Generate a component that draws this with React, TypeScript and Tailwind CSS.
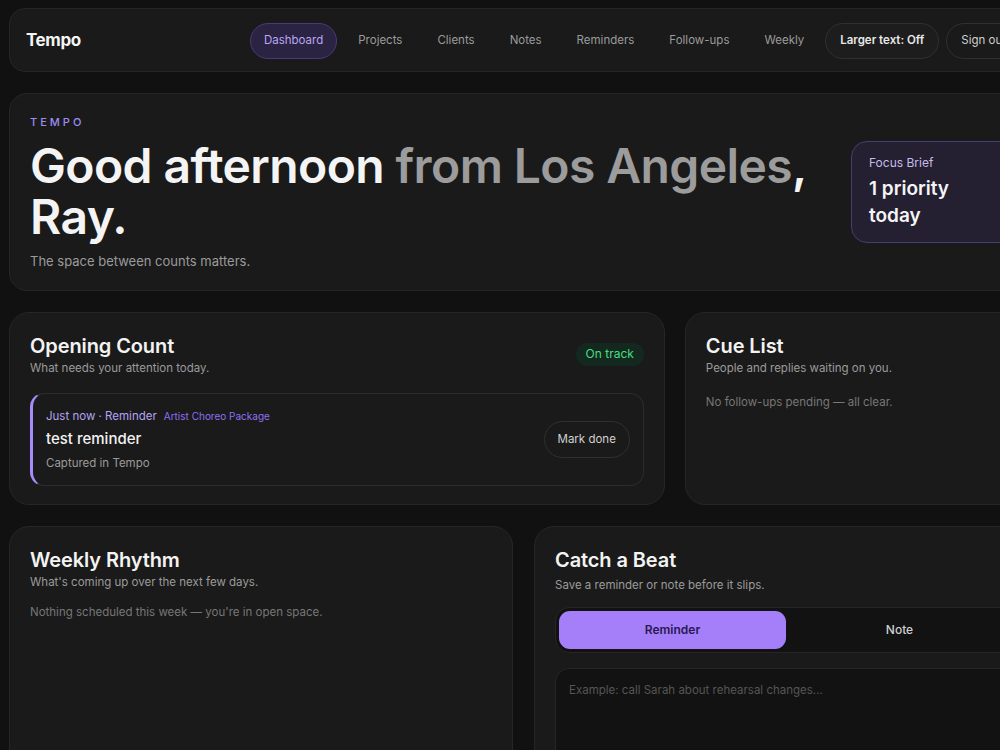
import React from "react";

const font = { fontFamily: "Inter, 'Noto Sans', sans-serif" };

function NavLink({ label, active }: { label: string; active?: boolean }) {
  return (
    <div
      className={
        active
          ? "h-9 flex items-center px-[13px] rounded-full border border-[#4a3a78] bg-[#2b2342] text-[11.5px] text-[#b9a6f5]"
          : "h-9 flex items-center px-[14px] rounded-full text-[11.5px] text-[#9b9b9b]"
      }
    >
      {label}
    </div>
  );
}

function CardTitle({ children }: { children: React.ReactNode }) {
  return <div className="text-[20px] leading-[28px] font-semibold text-[#f3f3f3] tracking-[-0.1px]">{children}</div>;
}

function CardHeader({ title, sub }: { title: string; sub: string }) {
  return (
    <div>
      <CardTitle>{title}</CardTitle>
      <div className="text-[11.5px] leading-[16px] text-[#9a9a9a]">{sub}</div>
    </div>
  );
}

export default function App() {
  return (
    <div className="w-[1000px] h-[750px] overflow-hidden bg-[#111111]" style={font}>
      <div className="w-[1048px] pl-[9px] pt-[8px] flex flex-col gap-[21px]">
        {/* Nav */}
        <div className="h-16 w-[1029px] rounded-[16px] border border-[#262626] bg-[#1a1a1a] px-4 pt-[2px] flex items-center justify-between">
          <div className="text-[17px] font-bold text-[#f5f5f5] tracking-[-0.4px]">Tempo</div>
          <div className="flex items-center gap-[7px]">
            <NavLink label="Dashboard" active />
            <NavLink label="Projects" />
            <NavLink label="Clients" />
            <NavLink label="Notes" />
            <NavLink label="Reminders" />
            <NavLink label="Follow-ups" />
            <NavLink label="Weekly" />
            <div className="h-9 flex items-center px-[14px] rounded-full border border-[#303030] bg-[#1d1d1d] text-[11.5px] font-semibold text-[#e8e8e8]">
              Larger text: Off
            </div>
            <div className="h-9 flex items-center px-[14px] rounded-full border border-[#303030] text-[11.5px] text-[#cfcfcf]">
              Sign out
            </div>
          </div>
        </div>

        {/* Hero */}
        <div className="w-[1029px] h-[198px] rounded-[18px] border border-[#262626] bg-[#1a1a1a] px-5 flex items-center justify-between gap-6">
          <div className="flex-1">
            <div className="text-[11px] leading-[14px] tracking-[3px] text-[#9d8cf2] font-medium">TEMPO</div>
            <div className="mt-[11px] text-[48px] leading-[51px] font-semibold tracking-[-0.6px] text-[#f4f4f4]">
              Good afternoon <span className="text-[#9c9c9c]">from Los Angeles</span>, Ray.
            </div>
            <div className="mt-[10px] text-[13px] leading-[18px] text-[#9a9a9a]">The space between counts matters.</div>
          </div>
          <div className="w-[166px] shrink-0 rounded-[16px] border border-[#473d6e] bg-[#241f31] px-[17px] py-[13px]">
            <div className="text-[12px] leading-[16px] text-[#c6bce8]">Focus Brief</div>
            <div className="mt-[4px] text-[19px] leading-[27px] font-semibold text-[#f5f5f5] w-[110px]">1 priority today</div>
          </div>
        </div>

        {/* Row 2 */}
        <div className="w-[1029px] grid grid-cols-[1.3fr_0.7fr] gap-[20px]">
          <div className="h-[193px] rounded-[20px] border border-[#262626] bg-[#1a1a1a] px-5 pt-[19px]">
            <div className="flex items-center justify-between">
              <CardHeader title="Opening Count" sub="What needs your attention today." />
              <div className="h-[23px] px-[10px] flex items-center rounded-full bg-[#13291f] text-[12px] text-[#4ade80]">On track</div>
            </div>
            <div className="mt-[17px] rounded-[14px] border border-[#2c2c2c] border-l-[3px] border-l-[#a78bfa] pl-[13px] pr-[13px] py-[14px] flex items-center justify-between">
              <div>
                <div className="flex items-baseline gap-[7px] leading-[16px]">
                  <span className="text-[11.5px] text-[#b4a3f3]">Just now · Reminder</span>
                  <span className="text-[10px] text-[#8f6ff2]">Artist Choreo Package</span>
                </div>
                <div className="mt-[4px] text-[15px] leading-[22px] font-medium text-[#f2f2f2]">test reminder</div>
                <div className="mt-[5px] text-[11.5px] leading-[16px] text-[#9a9a9a]">Captured in Tempo</div>
              </div>
              <div className="h-[37px] px-[13px] flex items-center rounded-full border border-[#303030] text-[11.5px] text-[#d0d0d0]">Mark done</div>
            </div>
          </div>
          <div className="h-[193px] rounded-[20px] border border-[#262626] bg-[#1a1a1a] px-5 pt-[19px]">
            <CardHeader title="Cue List" sub="People and replies waiting on you." />
            <div className="mt-[18px] text-[11.5px] leading-[16px] text-[#777777]">No follow-ups pending — all clear.</div>
          </div>
        </div>

        {/* Row 3 */}
        <div className="w-[1029px] grid grid-cols-2 gap-[21px]">
          <div className="h-[300px] rounded-[20px] border border-[#262626] bg-[#1a1a1a] px-5 pt-[19px]">
            <CardHeader title="Weekly Rhythm" sub="What's coming up over the next few days." />
            <div className="mt-[14px] text-[11.5px] leading-[16px] text-[#777777]">Nothing scheduled this week — you're in open space.</div>
          </div>
          <div className="h-[300px] rounded-[20px] border border-[#262626] bg-[#1a1a1a] px-5 pt-[19px]">
            <CardTitle>Catch a Beat</CardTitle>
            <div className="mt-[3px] text-[11.5px] leading-[16px] text-[#9a9a9a]">Save a reminder or note before it slips.</div>
            <div className="mt-[14px] h-[46px] rounded-[14px] border border-[#262626] bg-[#121212] p-[3px] grid grid-cols-2 gap-0">
              <div className="rounded-[11px] bg-[#a57ffa] flex items-center justify-center text-[12px] font-semibold text-[#2a1850]">Reminder</div>
              <div className="flex items-center justify-center text-[12px] font-medium text-[#cfcfcf]">Note</div>
            </div>
            <div className="mt-[15px] h-[120px] rounded-[14px] border border-[#262626] bg-[#121212] px-[13px] py-[13px] text-[11.5px] leading-[16px] text-[#555555]">
              Example: call Sarah about rehearsal changes...
            </div>
          </div>
        </div>
      </div>
    </div>
  );
}
